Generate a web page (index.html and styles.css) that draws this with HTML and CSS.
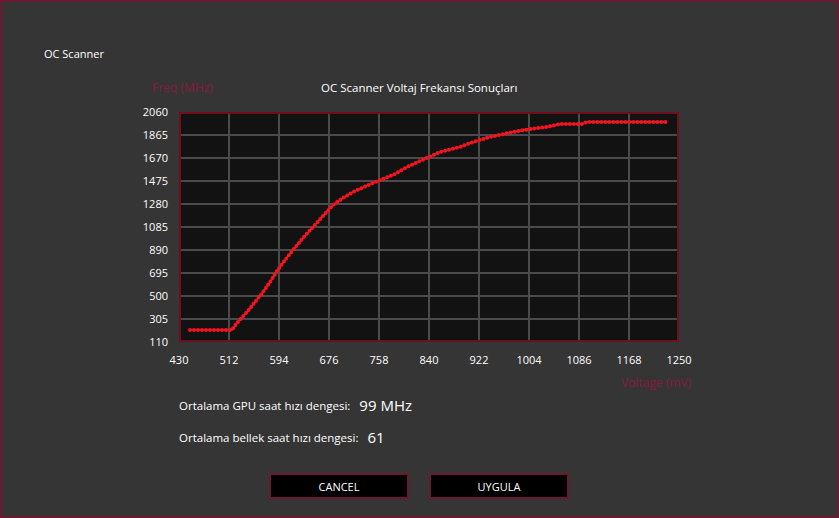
FILE: index.html
```html
<!DOCTYPE html>
<html lang="tr">
<head>
    <meta charset="UTF-8">
    <title>OC Scanner</title>
    <link rel="stylesheet" href="styles.css">
</head>
<body>
    <div class="window">
        <div class="title">OC Scanner</div>

        <div class="chart-head">
            <span class="axis-name">Freq (MHz)</span>
            <span class="chart-title">OC Scanner Voltaj Frekansı Sonuçları</span>
        </div>

        <div class="plot-row">
            <div class="y-axis">
                <span>2060</span>
                <span>1865</span>
                <span>1670</span>
                <span>1475</span>
                <span>1280</span>
                <span>1085</span>
                <span>890</span>
                <span>695</span>
                <span>500</span>
                <span>305</span>
                <span>110</span>
            </div>
            <svg class="plot" width="500" height="230" viewBox="0 0 500 230">
                <rect x="0" y="0" width="500" height="230" fill="#121212"/>
                <g stroke="#4b4b4b" stroke-width="2">
                    <line x1="50" y1="0" x2="50" y2="230"/>
                    <line x1="100" y1="0" x2="100" y2="230"/>
                    <line x1="150" y1="0" x2="150" y2="230"/>
                    <line x1="200" y1="0" x2="200" y2="230"/>
                    <line x1="250" y1="0" x2="250" y2="230"/>
                    <line x1="300" y1="0" x2="300" y2="230"/>
                    <line x1="350" y1="0" x2="350" y2="230"/>
                    <line x1="400" y1="0" x2="400" y2="230"/>
                    <line x1="450" y1="0" x2="450" y2="230"/>
                    <line x1="0" y1="23" x2="500" y2="23"/>
                    <line x1="0" y1="46" x2="500" y2="46"/>
                    <line x1="0" y1="69" x2="500" y2="69"/>
                    <line x1="0" y1="92" x2="500" y2="92"/>
                    <line x1="0" y1="115" x2="500" y2="115"/>
                    <line x1="0" y1="138" x2="500" y2="138"/>
                    <line x1="0" y1="161" x2="500" y2="161"/>
                    <line x1="0" y1="184" x2="500" y2="184"/>
                    <line x1="0" y1="207" x2="500" y2="207"/>
                </g>
                <rect x="1" y="1" width="498" height="228" fill="none" stroke="#6e0f1c" stroke-width="2"/>
                <!-- frequency curve -->
                <polyline class="curve" points="11,218 53,218 58,211 68,200 76,190 84,180 91,170 98,159 106,148 114,138 124,126 134,115 144,104 154,93 164,86 174,80 194,71 214,63 228,55 241,49 261,40 281,35 294,30 311,25 334,20 351,17 368,15 381,12 403,12 408,10 488,10"/>
                <polyline class="curve-dots" points="11,218 53,218 58,211 68,200 76,190 84,180 91,170 98,159 106,148 114,138 124,126 134,115 144,104 154,93 164,86 174,80 194,71 214,63 228,55 241,49 261,40 281,35 294,30 311,25 334,20 351,17 368,15 381,12 403,12 408,10 488,10"/>
            </svg>
        </div>

        <div class="x-axis">
            <span>430</span>
            <span>512</span>
            <span>594</span>
            <span>676</span>
            <span>758</span>
            <span>840</span>
            <span>922</span>
            <span>1004</span>
            <span>1086</span>
            <span>1168</span>
            <span>1250</span>
        </div>
        <div class="x-title">Voltage (mV)</div>

        <div class="stats">
            <div class="stat">
                <span class="stat-label">Ortalama GPU saat hızı dengesi:</span>
                <span class="stat-value">99 MHz</span>
            </div>
            <div class="stat">
                <span class="stat-label">Ortalama bellek saat hızı dengesi:</span>
                <span class="stat-value">61</span>
            </div>
        </div>

        <div class="actions">
            <button class="btn">CANCEL</button>
            <button class="btn">UYGULA</button>
        </div>
    </div>
</body>
</html>
```

FILE: styles.css
```css
body {
    margin: 0;
    background: #353535;
    font-family: 'Open Sans', 'Noto Sans', sans-serif;
    color: #fff;
}
.window {
    width: 839px;
    height: 518px;
    box-sizing: border-box;
    border: 2px solid #6a1a33;
    background: #353535;
    overflow: hidden;
}
.title {
    font-size: 11px;
    line-height: 16px;
    margin: 44px 0 0 42px;
}
.chart-head {
    display: flex;
    align-items: center;
    height: 16px;
    margin-top: 17px;
    padding-left: 150px;
}
.axis-name {
    width: 66px;
    color: #861a3e;
    font-size: 12px;
}
.chart-title {
    font-size: 11.5px;
    margin-left: 103px;
}
.plot-row {
    display: flex;
    margin-top: 10px;
}
.y-axis {
    width: 166px;
    height: 244px;
    display: flex;
    flex-direction: column;
    justify-content: space-between;
    text-align: right;
    font-size: 11px;
    line-height: 14px;
}
.plot {
    display: block;
    margin: 7px 0 0 11px;
}
.curve {
    fill: none;
    stroke: #d5101a;
    stroke-width: 1.8;
}
.curve-dots {
    fill: none;
    stroke: #f0151f;
    stroke-width: 4;
    stroke-linecap: round;
    stroke-dasharray: 0 4;
}
.x-axis {
    display: flex;
    margin: 4px 0 0 152px;
    font-size: 11px;
    line-height: 14px;
}
.x-axis span {
    width: 50px;
    text-align: center;
}
.x-title {
    color: #861a3e;
    font-size: 12px;
    line-height: 16px;
    text-align: right;
    margin: 8px 146px 0 0;
}
.stats {
    display: flex;
    flex-direction: column;
    gap: 12px;
    margin: 4px 0 0 177px;
}
.stat {
    display: flex;
    align-items: center;
    gap: 9px;
    height: 20px;
}
.stat-label {
    font-size: 11.5px;
}
.stat-value {
    font-size: 15px;
}
.actions {
    display: flex;
    gap: 20px;
    margin: 26px 0 0 267px;
}
.btn {
    width: 140px;
    height: 26px;
    background: #000;
    border: 2px solid #6b1830;
    color: #fff;
    font-family: inherit;
    font-size: 11px;
    padding: 0;
}
```
